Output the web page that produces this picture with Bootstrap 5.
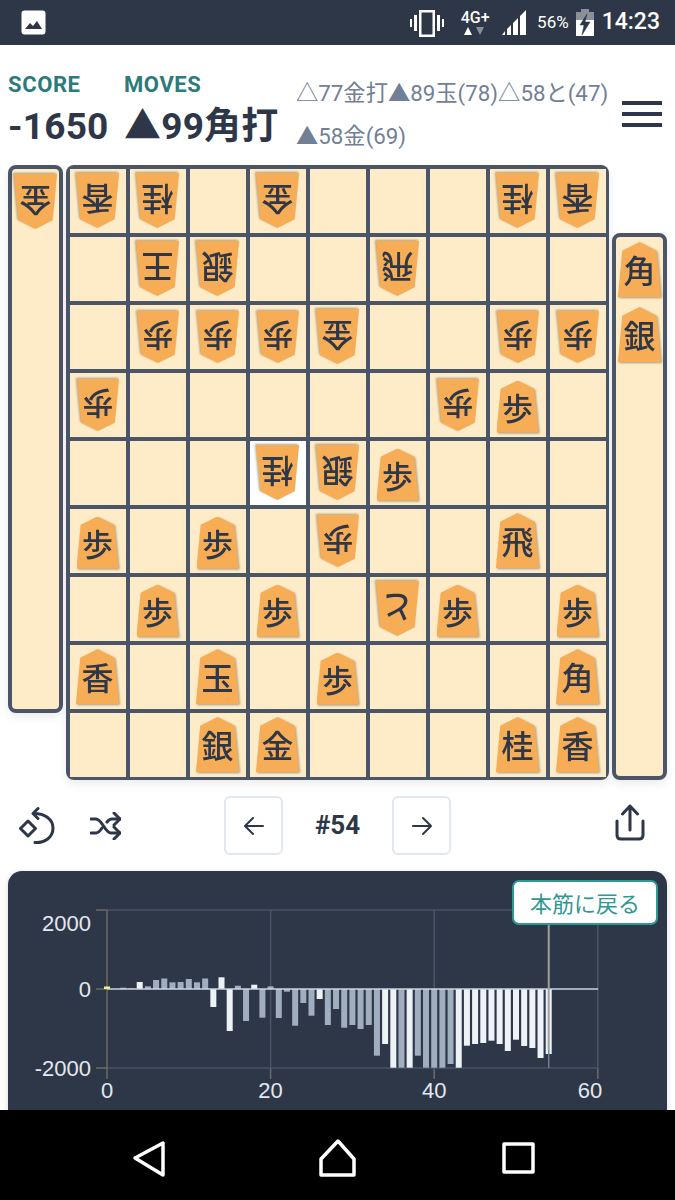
<!DOCTYPE html>
<html lang="ja">

<head>
    <meta charset="UTF-8">
    <meta name="viewport" content="width=device-width, initial-scale=1.0">
    <title>Shogi</title>
    <link href="https://cdn.jsdelivr.net/npm/bootstrap@5.3.3/dist/css/bootstrap.min.css" rel="stylesheet">
    <style>
        body {
            font-family: Roboto, "Noto Sans CJK JP", sans-serif;
            color: #2d3748;
            background: #fff;
            height: 1200px;
            overflow: hidden;
        }

        .phone-bar {
            height: 45px;
            background: #2d3748;
            color: #fff;
            padding: 0 15px 0 21px;
        }

        .bar-time {
            font-size: 23px;
            font-weight: 500;
            margin-left: 8px;
        }

        .bar-pct {
            font-size: 17px;
            margin-left: 10px;
            margin-right: 7px;
        }

        .bar-net {
            width: 32px;
            margin: 0 11px 0 15px;
            font-size: 16px;
            line-height: 16px;
            font-weight: 500;
        }

        .app-main {
            height: 1065px;
            overflow: hidden;
            padding: 0 8px;
        }

        .head-row {
            height: 120px;
            padding-top: 26px;
        }

        .label-txt {
            color: #2c7a7b;
            font-size: 22px;
            font-weight: 700;
            letter-spacing: .6px;
            line-height: 27px;
        }

        .value-txt {
            font-size: 37px;
            font-weight: 700;
            letter-spacing: .2px;
            line-height: 44px;
            margin-top: 7px;
            white-space: nowrap;
        }

        .score-col {
            width: 116px;
        }

        .moves-col {
            width: 172px;
        }

        .recent-moves {
            width: 316px;
            color: #718096;
            font-size: 22.300px;
            line-height: 43px;
            padding-top: 1px;
        }

        .recent-moves span {
            display: inline-block;
        }

        .menu-btn {
            width: 40px;
            margin-left: 10px;
            margin-top: 30px;
        }

        .menu-btn span {
            display: block;
            height: 4px;
            background: #2d3748;
            margin-bottom: 7px;
        }

        .shogi-wrap {
            height: 615px;
        }

        .stand {
            width: 55px;
            background: #feebc8;
            border: 4px solid #4a5568;
            border-radius: 8px;
            box-shadow: 0 4px 10px rgba(0, 0, 0, .08);
        }

        .stand-left {
            height: 548px;
        }

        .stand-right {
            height: 547px;
        }

        .stand-slot {
            height: 65px;
        }

        .board {
            width: 543px;
            height: 615px;
            margin: 0 3px;
            padding: 3.500px;
            display: grid;
            grid-template-columns: repeat(9, 56px);
            grid-template-rows: repeat(9, 64px);
            gap: 4px;
            background: #4a5568;
            border-radius: 8px;
            box-shadow: 0 4px 10px rgba(0, 0, 0, .08);
        }

        .sq {
            background: #feebc8;
        }

        .sq-last {
            background: #fff;
        }

        .koma {
            position: relative;
            flex: none;
            width: 43px;
            height: 55px;
            font-size: 32px;
            line-height: 1;
            filter: drop-shadow(1px 1px 1px rgba(60, 60, 40, .45));
        }

        .koma::before {
            content: "";
            position: absolute;
            inset: 0;
            background: #f6ad55;
            clip-path: polygon(50% 0, 90% 16%, 100% 100%, 0 100%, 10% 16%);
        }

        .koma b {
            position: relative;
            font-weight: 500;
            padding-top: 11px;
            display: block;
            text-align: center;
            font-family: "Noto Sans CJK JP", sans-serif;
        }

        .koma-gote {
            transform: rotate(180deg);
        }

        .koma-fu {
            width: 42px;
            height: 52px;
            font-size: 31px;
        }

        .koma-fu b {
            padding-top: 10px;
        }

        .koma-fu.koma-sente {
            transform: translateY(2px);
        }

        .ctrl-row {
            height: 91px;
            padding: 16px 0 0 11px;
        }

        .ctrl-left {
            width: 205px;
            height: 59px;
            gap: 35px;
        }

        .step-btn {
            width: 59px;
            height: 59px;
            padding: 0;
            border: 2px solid #e2e8f0;
            border-radius: 6px;
            background: #fff;
        }

        .move-no {
            width: 109px;
            text-align: center;
            font-size: 26px;
            font-weight: 700;
            line-height: 59px;
        }

        .share-ico {
            margin-top: -5px;
            margin-right: 22px;
        }

        .chart-card {
            position: relative;
            height: 300px;
            background: #2d3748;
            border-radius: 14px;
            box-shadow: 0 2px 6px rgba(0, 0, 0, .15);
        }

        .chart-svg {
            position: absolute;
            left: 0;
            top: 0;
        }

        .chart-svg text {
            font-family: "Liberation Sans", Arial, sans-serif;
            font-size: 22px;
            fill: #e2e8f0;
        }

        .back-btn {
            position: absolute;
            left: 504px;
            top: 9px;
            width: 146px;
            height: 45px;
            padding: 0;
            background: #fff;
            color: #319795;
            border: 2px solid #319795;
            border-radius: 7px;
            font-size: 22px;
            font-family: "Noto Sans CJK JP", sans-serif;
        }

        .nav-bar {
            height: 90px;
            background: #000;
        }
    </style>
</head>

<body>
    <div class="phone-bar d-flex align-items-center">
        <svg width="26" height="25" viewBox="0 0 26 25">
            <rect x="0.5" y="0.5" width="24" height="24" rx="3" fill="#fff" />
            <path d="M4 19l5-6 3 3 4-5 5 8z" fill="#2d3748" />
        </svg>
        <div class="flex-grow-1"></div>
        <svg width="34" height="32" viewBox="0 0 34 32" fill="#fff">
            <rect x="0" y="12" width="2" height="8" />
            <rect x="4" y="8" width="3" height="16" />
            <path fill-rule="evenodd" d="M9 3h16v27H9zM11.500 5.500v22h11v-22z" />
            <rect x="27" y="8" width="3" height="16" />
            <rect x="32" y="12" width="2" height="8" />
        </svg>
        <div class="bar-net text-center">4G+
            <svg class="d-block" width="32" height="10" viewBox="0 0 32 10">
                <path d="M5 9l4-8 4 8z" fill="#fff" />
                <path d="M17 1h8l-4 8z" fill="#8a8f98" />
            </svg>
        </div>
        <svg width="25" height="25" viewBox="0 0 25 25" fill="#fff">
            <path d="M24 0v25h-6V6zM16 8v17h-5V13zM9 15v10H5v-6zM3 21v4H0z" />
        </svg>
        <span class="bar-pct">56%</span>
        <svg width="18" height="27" viewBox="0 0 18 27">
            <path d="M5 0h8v3h5v8H0V3h5z" fill="#8a8f98" />
            <path d="M0 11h18v16H0z" fill="#fff" />
            <path d="M11 5L4 16h4l-2 10 8-13H9z" fill="#2d3748" stroke="#2d3748" stroke-width=".5" />
        </svg>
        <span class="bar-time">14:23</span>
    </div>

    <main class="app-main">
        <div class="head-row d-flex align-items-start">
            <div class="score-col">
                <div class="label-txt">SCORE</div>
                <div class="value-txt">-1650</div>
            </div>
            <div class="moves-col">
                <div class="label-txt">MOVES</div>
                <div class="value-txt">▲99角打</div>
            </div>
            <div class="recent-moves"><span>△77金打</span><span>▲89玉(78)</span><span>△58と(47)</span><span>▲58金(69)</span></div>
            <button class="menu-btn btn p-0 border-0"><span></span><span></span><span></span></button>
        </div>

        <div class="shogi-wrap d-flex">
            <div class="stand stand-left align-self-start" id="standLeft"></div>
            <div class="board" id="board"></div>
            <div class="stand stand-right align-self-end" id="standRight"></div>
        </div>

        <div class="ctrl-row d-flex align-items-start">
            <div class="ctrl-left d-flex align-items-center">
                <svg width="36" height="38" viewBox="0 0 36 38" fill="none" stroke="#2d3748" stroke-width="3" stroke-linecap="round" stroke-linejoin="round">
                    <path d="M9 14l7.500 7.500L9 29l-7.500-7.500z" />
                    <path d="M19 1.500l-5 5 5 5" />
                    <path d="M15 6.500c10 0 19 5 19 14.500 0 10-9 15-18 14.500" />
                </svg>
                <svg width="31" height="28" viewBox="0 0 31 28" fill="none" stroke="#2d3748" stroke-width="3" stroke-linecap="round" stroke-linejoin="round">
                    <path d="M1 7h5c6 0 9 14 15 14h9" />
                    <path d="M1 21h5c2.500 0 4-2 6-5M17 10c1.500-2 3-3 5-3h8" />
                    <path d="M24 1l6 6-6 6M24 15l6 6-6 6" />
                </svg>
            </div>
            <button class="step-btn btn">
                <svg width="22" height="22" viewBox="0 0 22 22" fill="none" stroke="#2d3748" stroke-width="2" stroke-linecap="round" stroke-linejoin="round">
                    <path d="M20 11H3M10 3l-8 8 8 8" />
                </svg>
            </button>
            <div class="move-no">#54</div>
            <button class="step-btn btn">
                <svg width="22" height="22" viewBox="0 0 22 22" fill="none" stroke="#2d3748" stroke-width="2" stroke-linecap="round" stroke-linejoin="round">
                    <path d="M2 11h17M12 3l8 8-8 8" />
                </svg>
            </button>
            <div class="flex-grow-1"></div>
            <svg class="share-ico mt-2" width="30" height="38" viewBox="0 0 30 38" fill="none" stroke="#2d3748" stroke-width="3" stroke-linecap="round" stroke-linejoin="round">
                <path d="M15 26V2M7.500 10L15 2l7.500 8" />
                <path d="M2 17v14q0 4 4 4h18q4 0 4-4V17" />
            </svg>
        </div>

        <div class="chart-card">
            <svg class="chart-svg" id="chart" width="659" height="240" viewBox="8 871 659 240"></svg>
            <button class="back-btn btn">本筋に戻る</button>
        </div>
    </main>

    <div class="nav-bar d-flex align-items-center">
        <svg width="675" height="90" viewBox="0 1110 675 90" fill="none" stroke="#fff" stroke-width="3.500" stroke-linejoin="round">
            <path d="M163 1143v32l-28-17z" />
            <path d="M338 1141l16 18v16h-33v-16z" />
            <rect x="504" y="1144" width="29" height="28" />
        </svg>
    </div>

    <script>
        // 盤面: 段ごとに [筋, 駒, 先手?]
        const pieces = [
            [[1, '香', 0], [2, '桂', 0], [4, '金', 0], [8, '桂', 0], [9, '香', 0]],
            [[2, '王', 0], [3, '銀', 0], [6, '飛', 0]],
            [[2, '歩', 0], [3, '歩', 0], [4, '歩', 0], [5, '金', 0], [8, '歩', 0], [9, '歩', 0]],
            [[1, '歩', 0], [7, '歩', 0], [8, '歩', 1]],
            [[4, '桂', 0], [5, '銀', 0], [6, '歩', 1]],
            [[1, '歩', 1], [3, '歩', 1], [5, '歩', 0], [8, '飛', 1]],
            [[2, '歩', 1], [4, '歩', 1], [6, 'と', 0], [7, '歩', 1], [9, '歩', 1]],
            [[1, '香', 1], [3, '玉', 1], [5, '歩', 1], [9, '角', 1]],
            [[3, '銀', 1], [4, '金', 1], [8, '桂', 1], [9, '香', 1]]
        ];

        function komaHtml(name, sente) {
            const small = name === '歩' ? ' koma-fu' : '';
            const side = sente ? ' koma-sente' : ' koma-gote';
            return `<div class="koma${small}${side}"><b>${name}</b></div>`;
        }

        let boardHtml = '';
        pieces.forEach((row, r) => {
            for (let c = 1; c <= 9; c++) {
                const p = row.find(x => x[0] === c);
                const last = r === 4 && c === 4 ? ' sq-last' : '';
                boardHtml += `<div class="sq${last} d-flex align-items-center justify-content-center">${p ? komaHtml(p[1], p[2]) : ''}</div>`;
            }
        });
        document.getElementById('board').innerHTML = boardHtml;

        const slot = k => `<div class="stand-slot d-flex align-items-center justify-content-center">${k}</div>`;
        document.getElementById('standLeft').innerHTML = slot(komaHtml('金', 0));
        document.getElementById('standRight').innerHTML = slot(komaHtml('角', 1)) + slot(komaHtml('銀', 1));

        // 評価値グラフ: [高さpx, 色] w=白 g=灰
        const bars = [
            [2.500, 'y'], [0, 'g'], [1.300, 'g'], [.4, 'w'], [7, 'w'], [2.700, 'g'], [9, 'g'], [10.500, 'g'], [6.700, 'g'], [7, 'g'],
            [10, 'g'], [6.700, 'g'], [10.500, 'g'], [-18, 'w'], [11.700, 'w'], [-42, 'w'], [3.300, 'g'], [-32, 'g'], [4.300, 'w'], [-28.700, 'g'],
            [2.700, 'g'], [-29, 'g'], [-2.700, 'g'], [-36.700, 'g'], [-14, 'g'], [-26.700, 'g'], [-10, 'w'], [-36, 'g'], [-20, 'g'], [-38.700, 'g'],
            [-36, 'g'], [-40, 'g'], [-36, 'g'], [-66.700, 'g'], [-55, 'w'], [-78.700, 'w'], [-78.700, 'g'], [-78.700, 'w'], [-66.700, 'g'], [-78.700, 'g'],
            [-78.700, 'g'], [-78.700, 'g'], [-75, 'g'], [-78.700, 'w'], [-56.700, 'w'], [-55, 'w'], [-54, 'w'], [-51.700, 'w'], [-55, 'w'], [-62, 'w'],
            [-50.700, 'w'], [-57, 'w'], [-59, 'w'], [-69, 'w'], [-65, 'w']
        ];
        const barColor = { y: '#faf089', w: '#edf2f7', g: '#a0aec0' };
        const X0 = 107, XU = 8.18, YZ = 989;
        const xOf = i => X0 + XU * i;

        let s = '';
        [20, 40, 60].forEach(v => {
            s += `<line x1="${xOf(v)}" x2="${xOf(v)}" y1="910" y2="1068" stroke="#4a5568" stroke-width="1.500"/>`;
            s += `<line x1="${xOf(v)}" x2="${xOf(v)}" y1="1068" y2="1079" stroke="#6b6b6b" stroke-width="1.500"/>`;
            s += `<text x="${v === 60 ? 590 : xOf(v)}" y="1098" text-anchor="middle">${v}</text>`;
        });
        [910, 1068].forEach(y => {
            s += `<line x1="107" x2="598" y1="${y}" y2="${y}" stroke="#4a5568" stroke-width="1.500"/>`;
        });
        [910, 989, 1068].forEach(y => {
            s += `<line x1="96" x2="107" y1="${y}" y2="${y}" stroke="#6b6b5f" stroke-width="1.500"/>`;
        });
        s += `<line x1="107" x2="107" y1="910" y2="1079" stroke="#6b6b5f" stroke-width="1.500"/>`;
        s += `<text x="91" y="931" text-anchor="end">2000</text>`;
        s += `<text x="91" y="997" text-anchor="end">0</text>`;
        s += `<text x="91" y="1076" text-anchor="end">-2000</text>`;
        s += `<text x="107" y="1098" text-anchor="middle">0</text>`;
        bars.forEach((b, i) => {
            const h = Math.abs(b[0]);
            if (!h) return;
            const y = b[0] > 0 ? YZ - h : YZ;
            s += `<rect x="${xOf(i) - 3}" y="${y}" width="6" height="${h}" fill="${barColor[b[1]]}"/>`;
        });
        s += `<line x1="107" x2="598" y1="989" y2="989" stroke="#cbd5e0" stroke-width="1.500"/>`;
        s += `<line x1="${xOf(54)}" x2="${xOf(54)}" y1="910" y2="1050" stroke="#a0a0a0" stroke-width="2"/>`;
        s += `<line x1="${xOf(54)}" x2="${xOf(54)}" y1="1050" y2="1068" stroke="#718096" stroke-width="1.500"/>`;
        document.getElementById('chart').innerHTML = s;
    </script>
</body>

</html>
